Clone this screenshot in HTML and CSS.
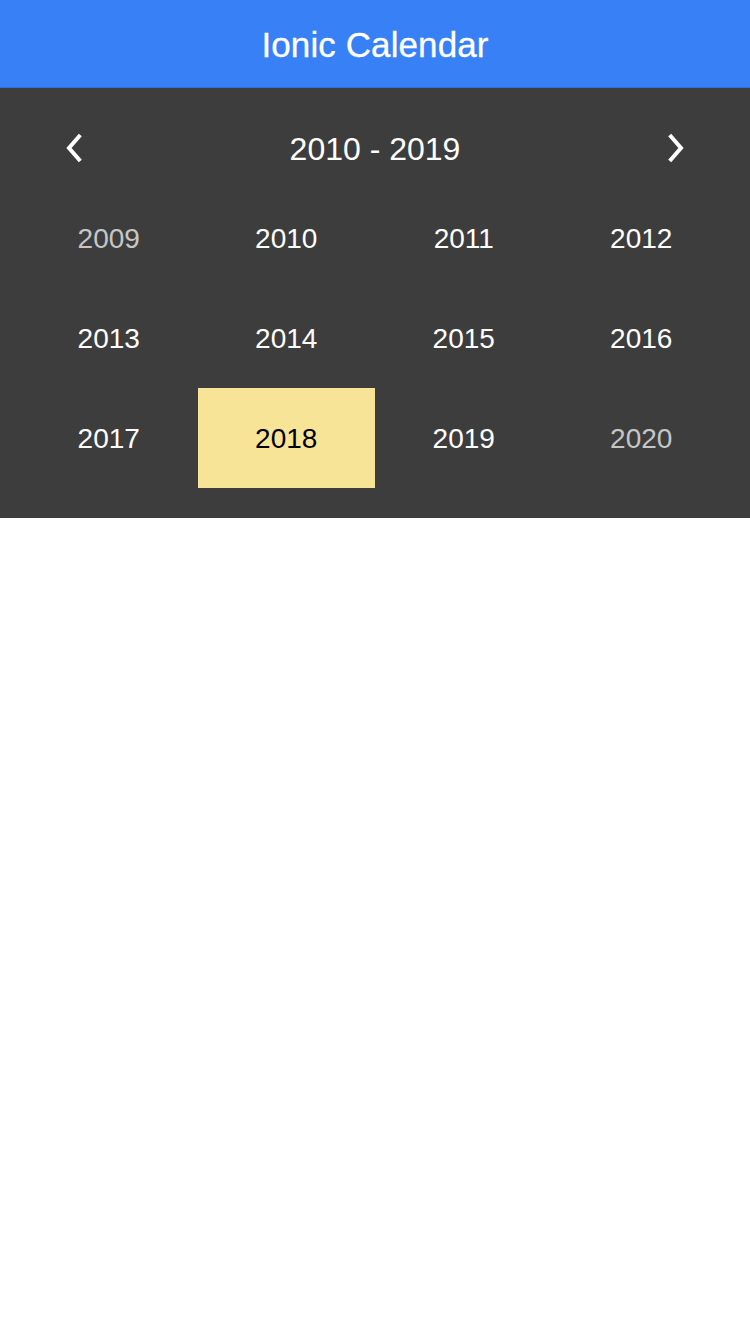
FILE: index.html
```html
<!DOCTYPE html>
<html>
<head>
<meta charset="utf-8">
<link rel="stylesheet" href="styles.css">
</head>
<body>
<header class="toolbar">
  <div class="title">Ionic Calendar</div>
</header>
<section class="calendar">
  <div class="nav">
    <button class="arrow" aria-label="previous">
      <svg width="20" height="32" viewBox="0 0 20 32"><path d="M15 4.5 L5 16 L15 27.5" fill="none" stroke="#fff" stroke-width="4" stroke-linecap="square"/></svg>
    </button>
    <div class="range">2010 - 2019</div>
    <button class="arrow" aria-label="next">
      <svg width="20" height="32" viewBox="0 0 20 32"><path d="M5 4.5 L15 16 L5 27.5" fill="none" stroke="#fff" stroke-width="4" stroke-linecap="square"/></svg>
    </button>
  </div>
  <div class="grid">
    <div class="cell dim">2009</div>
    <div class="cell">2010</div>
    <div class="cell">2011</div>
    <div class="cell">2012</div>
    <div class="cell">2013</div>
    <div class="cell">2014</div>
    <div class="cell">2015</div>
    <div class="cell">2016</div>
    <div class="cell">2017</div>
    <div class="cell selected">2018</div>
    <div class="cell">2019</div>
    <div class="cell dim">2020</div>
  </div>
</section>
</body>
</html>
```
FILE: styles.css
```css
html, body {
  margin: 0;
  padding: 0;
  background: #ffffff;
  font-family: "Liberation Sans", Arial, sans-serif;
}
.toolbar {
  height: 87px;
  background: #3880f5;
  border-bottom: 1px solid #2a6ee0;
  display: flex;
  align-items: center;
  justify-content: center;
}
.title {
  color: #ffffff;
  font-size: 35px;
  letter-spacing: 0.1px;
  padding-top: 2px;
  -webkit-text-stroke: 0.3px #ffffff;
}
.calendar {
  background: #3d3d3d;
  padding: 20px 20px 30px;
}
.nav {
  height: 80px;
  display: flex;
  align-items: center;
  justify-content: space-between;
  padding: 0 44px;
}
.arrow {
  background: none;
  border: 0;
  padding: 0;
  width: 20px;
  height: 32px;
  display: flex;
}
.range {
  color: #ffffff;
  font-size: 32px;
  padding-top: 2px;
}
.grid {
  display: grid;
  grid-template-columns: repeat(4, 1fr);
  grid-auto-rows: 100px;
}
.cell {
  display: flex;
  align-items: center;
  justify-content: center;
  color: #ffffff;
  font-size: 28px;
  padding-top: 2px;
}
.cell.dim {
  color: #c6c6c6;
}
.cell.selected {
  background: #f8e497;
  color: #000000;
}
```
